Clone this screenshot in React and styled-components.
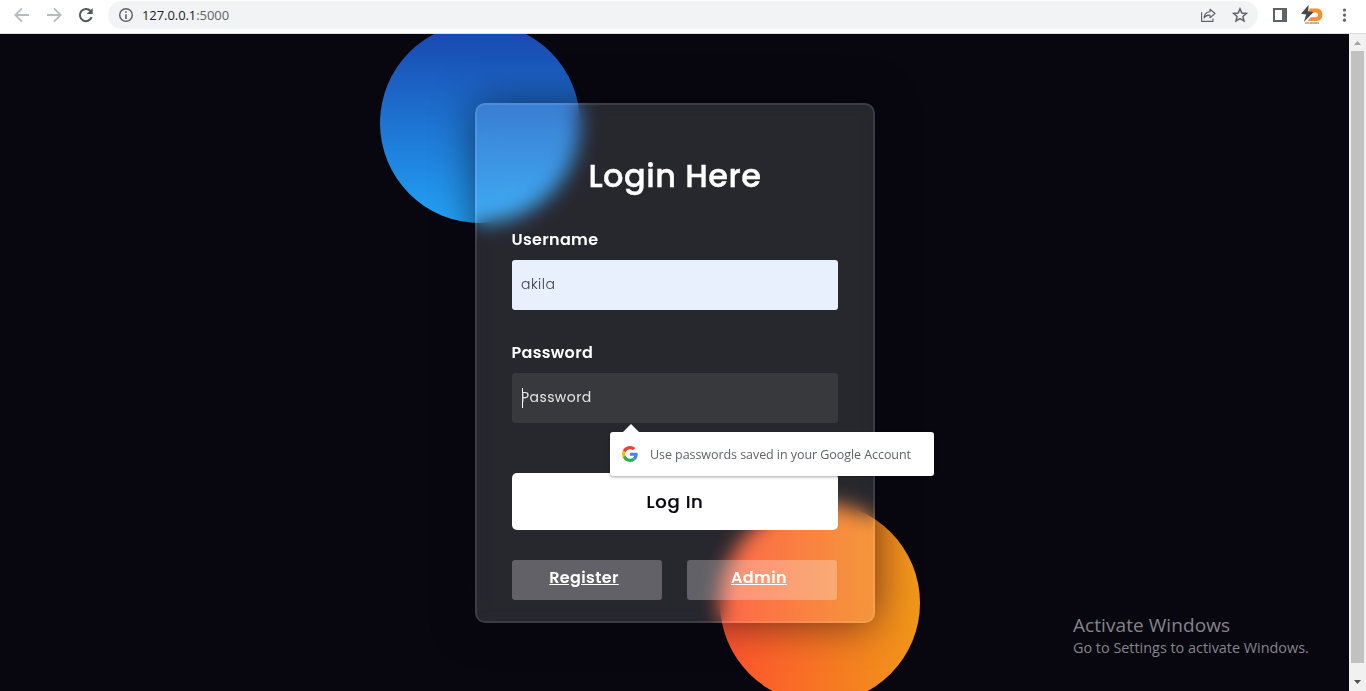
import React from "react";
import styled, { createGlobalStyle } from "styled-components";

const GlobalStyle = createGlobalStyle`
  *, *::before, *::after { box-sizing: border-box; }
  html, body { margin: 0; padding: 0; overflow: hidden; background: #080710; }
`;

const geometric = `"Poppins", "Inter", sans-serif`;
const system = `"Segoe UI", "Open Sans", sans-serif`;

const Window = styled.div`
  display: flex;
  flex-direction: column;
  width: 1366px;
  height: 691px;
  overflow: hidden;
`;

const Toolbar = styled.header`
  display: flex;
  align-items: center;
  flex: none;
  height: 34px;
  padding: 0 14px 4px 14px;
  background: #fff;
  border-bottom: 1px solid #dadce0;
  svg { display: block; flex: none; }
`;

const NavButtons = styled.div`
  display: flex;
  gap: 16px;
  margin-right: 14px;
`;

const AddressBar = styled.div`
  display: flex;
  align-items: center;
  flex: 1;
  height: 28px;
  padding: 0 10px;
  border-radius: 14px;
  background: #f1f3f4;
`;

const Url = styled.span`
  flex: 1;
  margin-left: 8px;
  font: 13px/18px ${system};
  letter-spacing: -0.07px;
  color: #202124;
  span { color: #5f6368; }
`;

const AddressActions = styled.div`
  display: flex;
  gap: 16px;
`;

const BrowserActions = styled.div`
  display: flex;
  align-items: center;
  gap: 14px;
  margin: 0 -1px 0 15px;
`;

const Body = styled.div`
  display: flex;
  flex: 1;
  min-height: 0;
`;

const Page = styled.main`
  position: relative;
  display: flex;
  justify-content: center;
  align-items: flex-start;
  flex: 1;
  overflow: hidden;
  padding: 69px 0 0 1px;
  background: #080710;
`;

const Stage = styled.div`
  position: relative;
  display: flex;
  justify-content: center;
  width: 430px;
  height: 520px;
`;

const Shape = styled.div`
  position: absolute;
  width: 200px;
  height: 200px;
  border-radius: 50%;
  ${(p) =>
    p.$warm
      ? "right: -30px; bottom: -80px; background: linear-gradient(to right, #ff512f, #f09819);"
      : "left: -80px; top: -80px; background: linear-gradient(#1845ad, #23a2f6);"}
`;

const Card = styled.form`
  position: relative;
  display: flex;
  flex-direction: column;
  width: 400px;
  height: 520px;
  padding: 50px 35px 0;
  background: rgba(255, 255, 255, 0.13);
  border: 2px solid rgba(255, 255, 255, 0.1);
  border-radius: 10px;
  backdrop-filter: blur(10px);
  box-shadow: 0 0 40px rgba(8, 7, 16, 0.6);
  font-family: ${geometric};
  font-feature-settings: "cv11";
  color: #fff;
  > * { flex-shrink: 0; }
`;

const Title = styled.h3`
  margin: 0;
  font-size: 32px;
  font-weight: 500;
  line-height: 42px;
  letter-spacing: 0.5px;
  text-align: center;
  -webkit-text-stroke: 0.4px #fff;
`;

const Label = styled.label`
  margin: 31px 0 0 -0.5px;
  font-size: 16px;
  font-weight: 600;
  line-height: 24px;
  letter-spacing: 0.32px;
`;

const Field = styled.div`
  display: flex;
  align-items: center;
  height: 50px;
  margin-top: 8px;
  padding: 0 9px 2px;
  border-radius: 3px;
  background: ${(p) => (p.$filled ? "#e8f0fe" : "#38393c")};
  color: ${(p) => (p.$filled ? "#3c4048" : "#e5e5e5")};
  font-size: 14px;
  font-weight: ${(p) => (p.$filled ? 300 : 400)};
  letter-spacing: ${(p) => p.$spacing}px;
`;

const Caret = styled.i`
  width: 1px;
  height: 20px;
  margin: 2px -2px 0 1px;
  background: #fff;
`;

const Submit = styled.button`
  height: 57px;
  margin-top: 50px;
  padding: 0;
  border: 0;
  border-radius: 5px;
  background: #fff;
  color: #080710;
  font: 500 18px/27px ${geometric};
  letter-spacing: 0.7px;
  -webkit-text-stroke: 0.2px #080710;
`;

const LinkRow = styled.div`
  display: flex;
  gap: 25px;
  margin-top: 30px;
`;

const LinkBox = styled.div`
  width: 150px;
  height: 40px;
  padding: 5px 6px 0 0;
  border-radius: 3px;
  background: rgba(255, 255, 255, 0.27);
  text-align: center;
  a {
    color: #fff;
    font-size: 16px;
    font-weight: 600;
    line-height: 25px;
    letter-spacing: 0.35px;
    text-decoration: underline;
  }
`;

const Popup = styled.aside`
  position: absolute;
  left: 610px;
  top: 398px;
  display: flex;
  align-items: center;
  gap: 12px;
  width: 324px;
  height: 44px;
  padding: 0 12px;
  border-radius: 3px;
  background: #fff;
  box-shadow: 0 1px 3px rgba(0, 0, 0, 0.35);
  color: #5f6368;
  font: 12.5px/18px ${system};
  letter-spacing: -0.06px;
  white-space: nowrap;
  span { padding-top: 1px; }
  &::before {
    content: "";
    position: absolute;
    left: 13px;
    top: -8px;
    border: 8.5px solid transparent;
    border-top: 0;
    border-bottom: 8px solid #fff;
  }
`;

const Watermark = styled.aside`
  position: absolute;
  left: 1073px;
  top: 578px;
  color: #858488;
  font: 14.4px/20px ${system};
  white-space: nowrap;
  strong {
    display: block;
    font-weight: 400;
    font-size: 19px;
    line-height: 26px;
    letter-spacing: 0.07px;
  }
`;

const Scrollbar = styled.div`
  display: flex;
  flex-direction: column;
  align-items: center;
  width: 17px;
  background: #f1f1f1;
`;

const ScrollArrow = styled.svg`
  display: block;
  width: 17px;
  height: 17px;
  fill: ${(p) => p.$color};
`;

const Thumb = styled.div`
  width: 13px;
  height: 612px;
  margin-bottom: 11px;
  background: #c1c1c1;
`;

const Arrow = ({ forward }) => (
  <svg width="16" height="16" viewBox="0 0 16 16" fill="none" stroke="#b9babd" strokeWidth="1.8">
    <path d={forward ? "M1 8H14M8 1.3L14.7 8L8 14.7" : "M15 8H2M8 1.3L1.3 8L8 14.7"} />
  </svg>
);

const Reload = () => (
  <svg width="16" height="16" viewBox="0 0 16 16">
    <path d="M13.7 10.2A6.1 6.1 0 1 1 12.6 4" fill="none" stroke="#54585d" strokeWidth="2" />
    <path d="M14.7 1V7H8.7Z" fill="#54585d" />
  </svg>
);

const Info = () => (
  <svg width="16" height="16" viewBox="0 0 16 16">
    <circle cx="8" cy="8" r="6.3" fill="none" stroke="#5f6368" strokeWidth="1.5" />
    <path d="M7.2 7.2h1.6V12H7.2zM7.2 4.2h1.6v1.6H7.2z" fill="#5f6368" />
  </svg>
);

const Share = () => (
  <svg width="16" height="16" viewBox="0 0 16 16" fill="none" stroke="#5f6368" strokeWidth="1.15" strokeLinejoin="round">
    <path d="M1.6 5.2V14.3H13V11.5" />
    <path d="M10 2.2L15 6.5L10 10.7V8.2C7.3 8 5.3 9 4 11C4.2 7.3 6.3 5 10 4.7Z" />
  </svg>
);

const Star = () => (
  <svg width="16" height="16" viewBox="0 0 16 16">
    <path d="M8 1.8L9.8 6L14.4 6.4L10.9 9.4L12 13.9L8 11.5L4 13.9L5.1 9.4L1.6 6.4L6.2 6Z" fill="none" stroke="#5f6368" strokeWidth="1.5" />
  </svg>
);

const SidePanel = () => (
  <svg width="14" height="14" viewBox="0 0 14 14">
    <path fillRule="evenodd" d="M0 0H14V14H0ZM2 2V12H9V2Z" fill="#5f6368" />
  </svg>
);

const Extension = () => (
  <svg width="22" height="20" viewBox="0 0 22 20">
    <path d="M8.5 3.6H15.5C19.4 3.6 21.4 6.2 21.4 9.8S19.2 16 15.5 16H6.6L9.8 12.2H14.6C16.4 12.2 17 11.2 17 9.8S16.4 7.4 14.6 7.4H8Z" fill="#f7902a" />
    <path d="M7.6 0L0 8.8L5.2 9.6L2.8 17L12.6 7.1L7.2 6.2Z" fill="#47484b" />
    <path d="M4 18H8" stroke="#f3a35c" strokeWidth="1.8" />
    <path d="M8.5 18H18" stroke="#aaa7a5" strokeWidth="1.8" strokeDasharray="2.4 0.4" />
  </svg>
);

const Menu = () => (
  <svg width="16" height="16" viewBox="0 0 16 16" fill="#5f6368">
    <circle cx="7.5" cy="3" r="1.6" />
    <circle cx="7.5" cy="8.1" r="1.6" />
    <circle cx="7.5" cy="13.2" r="1.6" />
  </svg>
);

const GoogleLogo = () => (
  <svg width="16" height="16" viewBox="0 0 48 48">
    <path fill="#EA4335" d="M24 9.5c3.54 0 6.71 1.22 9.21 3.6l6.85-6.85C35.9 2.38 30.47 0 24 0 14.62 0 6.51 5.38 2.56 13.22l7.98 6.19C12.43 13.72 17.74 9.5 24 9.5z" />
    <path fill="#4285F4" d="M46.98 24.55c0-1.57-.15-3.09-.38-4.55H24v9.02h12.94c-.58 2.96-2.26 5.48-4.78 7.18l7.73 6c4.51-4.18 7.09-10.36 7.09-17.65z" />
    <path fill="#FBBC05" d="M10.53 28.59c-.48-1.45-.76-2.99-.76-4.59s.27-3.14.76-4.59l-7.98-6.19C.92 16.46 0 20.12 0 24c0 3.88.92 7.54 2.56 10.78l7.97-6.19z" />
    <path fill="#34A853" d="M24 48c6.48 0 11.93-2.13 15.89-5.81l-7.73-6c-2.15 1.45-4.92 2.3-8.16 2.3-6.26 0-11.57-4.22-13.47-9.91l-7.98 6.19C6.51 42.62 14.62 48 24 48z" />
  </svg>
);

export default function App() {
  return (
    <Window>
      <GlobalStyle />
      <Toolbar>
        <NavButtons>
          <Arrow />
          <Arrow forward />
          <Reload />
        </NavButtons>
        <AddressBar>
          <Info />
          <Url>127.0.0.1<span>:5000</span></Url>
          <AddressActions>
            <Share />
            <Star />
          </AddressActions>
        </AddressBar>
        <BrowserActions>
          <SidePanel />
          <Extension />
          <Menu />
        </BrowserActions>
      </Toolbar>
      <Body>
        <Page>
          <Stage>
            <Shape />
            <Shape $warm />
            <Card>
              <Title>Login Here</Title>
              <Label>Username</Label>
              <Field $filled $spacing={0.45}>akila</Field>
              <Label>Password</Label>
              <Field $spacing={0.42}><Caret />Password</Field>
              <Submit type="button">Log In</Submit>
              <LinkRow>
                <LinkBox><a>Register</a></LinkBox>
                <LinkBox><a>Admin</a></LinkBox>
              </LinkRow>
            </Card>
          </Stage>
          <Popup>
            <GoogleLogo />
            <span>Use passwords saved in your Google Account</span>
          </Popup>
          <Watermark>
            <strong>Activate Windows</strong>
            Go to Settings to activate Windows.
          </Watermark>
        </Page>
        <Scrollbar>
          <ScrollArrow $color="#a3a3a3" viewBox="0 0 17 17"><path d="M5 11L8.5 7L12 11Z" /></ScrollArrow>
          <Thumb />
          <ScrollArrow $color="#505050" viewBox="0 0 17 17"><path d="M5 6L8.5 10L12 6Z" /></ScrollArrow>
        </Scrollbar>
      </Body>
    </Window>
  );
}
